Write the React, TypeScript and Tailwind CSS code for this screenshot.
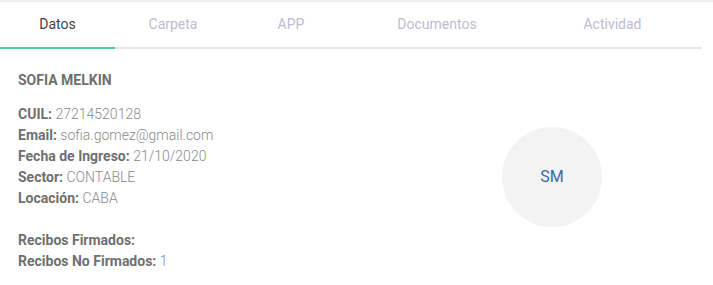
const tabs = [
  { label: "Datos", w: "w-[115px]", active: true },
  { label: "Carpeta", w: "w-[116px]", active: false },
  { label: "APP", w: "w-[120px]", active: false },
  { label: "Documentos", w: "w-[172px]", active: false },
  { label: "Actividad", w: "w-[179px]", active: false },
];

const datos = [
  { k: "CUIL:", v: "27214520128" },
  { k: "Email:", v: "sofia.gomez@gmail.com" },
  { k: "Fecha de Ingreso:", v: "21/10/2020" },
  { k: "Sector:", v: "CONTABLE" },
  { k: "Locación:", v: "CABA" },
];

const Field = ({ k, v }: { k: string; v: string }) => (
  <div className="h-[21px] leading-[21px]">
    <span className="font-bold text-[#6f6f6f]">{k}</span>{" "}
    <span className="font-light text-[#8a8a8a]">{v}</span>
  </div>
);

export default function App() {
  return (
    <div className="h-[285px] w-[713px] bg-white font-['Roboto',sans-serif] text-[14px]">
      <div className="h-[2px] w-full bg-[#efefef]" />
      <div className="flex w-[702px] border-b-2 border-[#e6e6e6]">
        {tabs.map((t) => (
          <div
            key={t.label}
            className={`${t.w} -mb-[2px] flex h-[47px] items-center justify-center border-b-2 ${
              t.active
                ? "border-[#52cba3] text-[#3e3e4e]"
                : "border-transparent text-[#bcbcd0]"
            }`}
          >
            {t.label}
          </div>
        ))}
      </div>
      <div className="flex w-[702px] pl-[18px]">
        <div className="flex-1 pt-[21px]">
          <div className="text-[14px] font-bold text-[#6f6f6f]">
            SOFIA MELKIN
          </div>
          <div className="mt-[13px]">
            {datos.map((d) => (
              <Field key={d.k} k={d.k} v={d.v} />
            ))}
          </div>
          <div className="mt-[21px]">
            <Field k="Recibos Firmados:" v="" />
            <Field k="Recibos No Firmados:" v="1" />
          </div>
        </div>
        <div className="mr-[100px] mt-[78px] flex h-[100px] w-[100px] items-center justify-center rounded-full bg-[#f3f3f3] text-[16px] text-[#2f6ea6]">
          SM
        </div>
      </div>
    </div>
  );
}
